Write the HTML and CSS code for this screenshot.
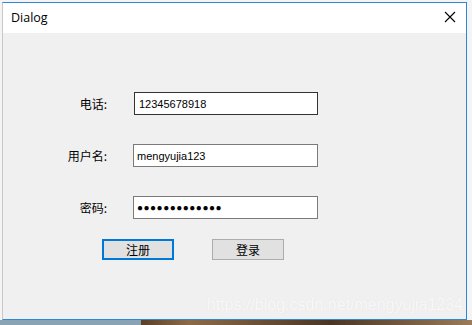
FILE: index.html
```html
<!DOCTYPE html>
<html lang="zh-CN">
<head>
  <meta charset="UTF-8" />
  <title>Dialog</title>
  <link rel="stylesheet" href="styles.css">
</head>
<body>
  <div class="desk">
    <div class="dialog">
      <div class="titlebar">
        <span class="title">Dialog</span>
        <svg class="close" width="12" height="12" viewBox="0 0 12 12">
          <path d="M1 1 L11 11 M11 1 L1 11" stroke="#000" stroke-width="1.1" fill="none"/>
        </svg>
      </div>

      <div class="content">
        <div class="form">
          <div class="row">
            <label class="lbl">电话:</label>
            <input class="field focus" value="12345678918" readonly />
          </div>
          <div class="row">
            <label class="lbl">用户名:</label>
            <input class="field" value="mengyujia123" readonly />
          </div>
          <div class="row">
            <label class="lbl">密码:</label>
            <input class="field pwd" value="●●●●●●●●●●●●●" readonly />
          </div>
        </div>

        <div class="btn-row">
          <button class="btn default">注册</button>
          <button class="btn">登录</button>
        </div>

        <!-- blog watermark on top of the screenshot -->
        <div class="mark">https://blog.csdn.net/mengyujia1234</div>
      </div>
    </div>
    <div class="taskbar"></div>
  </div>
</body>
</html>
```

FILE: styles.css
```css
* {
  box-sizing: border-box;
}

body {
  margin: 0;
  width: 472px;
  height: 325px;
  overflow: hidden;
  background: #f4f4f4;
  font-family: "Noto Sans CJK SC", "Noto Sans", sans-serif;
}

.desk {
  padding: 2px 0 0 2px;
  height: 100%;
  display: flex;
  flex-direction: column;
}

.dialog {
  width: 465px;
  height: 318px;
  border: 1px solid #2e86d6;
  border-left-color: #c9c9c9;
  display: flex;
  flex-direction: column;
  background: #f0f0f0;
}

.titlebar {
  height: 30px;
  background: #fff;
  display: flex;
  align-items: center;
  justify-content: space-between;
  padding: 0 10px 0 8px;
}

.title {
  font-family: "Open Sans", "Noto Sans", sans-serif;
  font-size: 12.5px;
  color: #000;
  margin-top: -2px;
}

.close {
  margin-top: -2px;
}

.content {
  position: relative;
  flex: 1;
  padding-top: 59px;
}

.form {
  display: flex;
  flex-direction: column;
  gap: 29px;
}

.row {
  display: flex;
  align-items: center;
}

.lbl {
  width: 105px;
  text-align: right;
  font-size: 12px;
  color: #000;
  padding-right: 1px;
}

.field {
  margin-left: 25px;
  width: 185px;
  height: 23px;
  border: 1px solid #7a7a7a;
  background: #fff;
  font-family: "Liberation Sans", Arial, sans-serif;
  font-size: 11px;
  padding: 0 3px;
  color: #000;
  outline: none;
}

.field.focus {
  border-color: #333;
  margin-left: 26px;
  width: 184px;
  padding-left: 4px;
}

.field.pwd {
  font-size: 10px;
  letter-spacing: 0.5px;
}

.btn-row {
  display: flex;
  gap: 38px;
  padding: 20px 0 0 99px;
}

.btn {
  width: 72px;
  height: 21px;
  background: #e1e1e1;
  border: 1px solid #adadad;
  font-family: "Noto Sans CJK SC", sans-serif;
  font-size: 12px;
  color: #000;
  padding: 0;
}

.btn.default {
  border: 2px solid #0078d7;
}

.mark {
  position: absolute;
  right: 3px;
  bottom: 5px;
  font-family: "Liberation Sans", Arial, sans-serif;
  font-size: 16px;
  color: #f8f8f8;
  text-shadow: 0 0 1px #e2e2e2;
}

.taskbar {
  flex: 1;
  margin-left: -2px;
  background: linear-gradient(to right, #8aa3b4 0, #8aa3b4 141px, #5a3f28 141px, #8c6a48 40%, #4a3525 70%, #9b7b58 100%);
}
```
